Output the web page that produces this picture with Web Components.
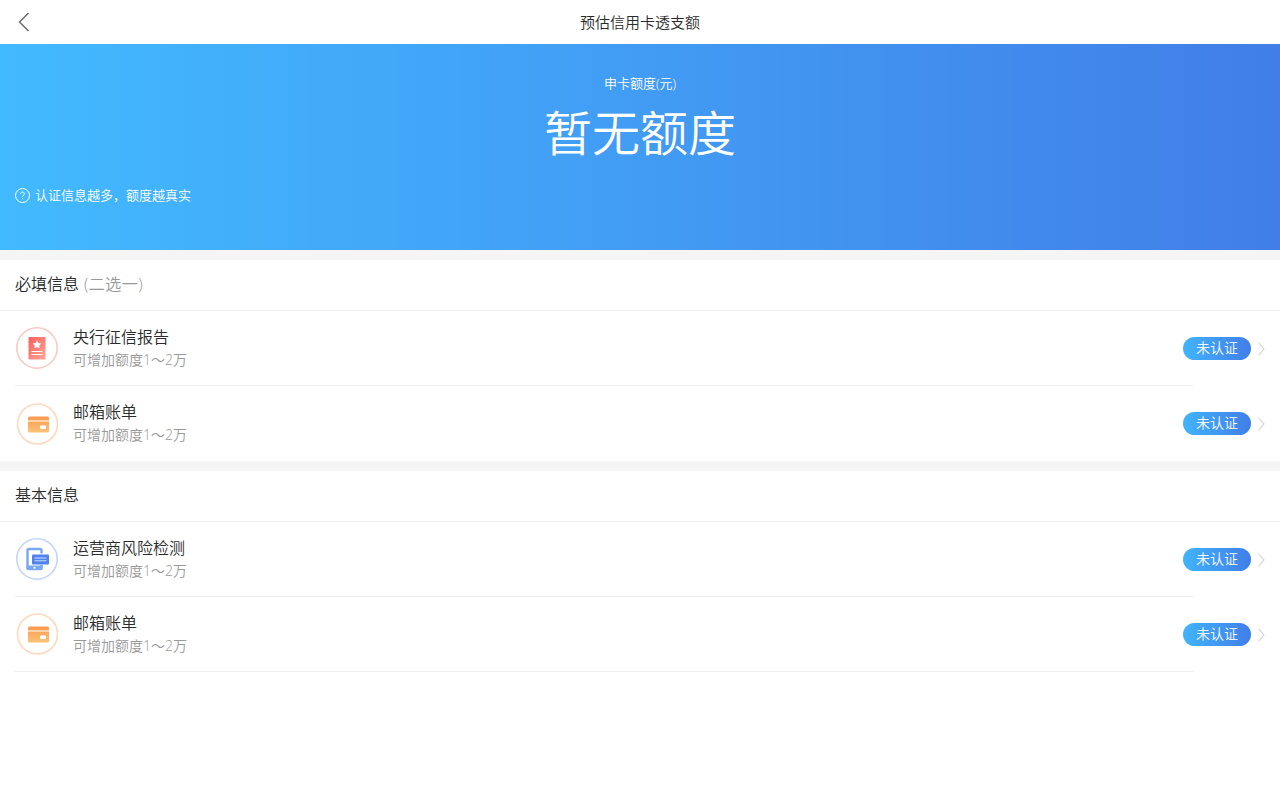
<!DOCTYPE html>
<html lang="zh">
<head>
<meta charset="utf-8">
<title>预估信用卡透支额</title>
<style>
  html, body { margin: 0; background: #fff; }
  body { font-family: "Open Sans", "Noto Sans CJK SC", sans-serif; font-weight: 350; color: #333; }
  credit-section { border-top: 10px solid #f5f5f5; }
</style>
</head>
<body>
<nav-bar>预估信用卡透支额</nav-bar>
<quota-hero label="申卡额度(元)" amount="暂无额度" tip="认证信息越多，额度越真实"></quota-hero>
<credit-section heading="必填信息" note="(二选一)">
  <credit-row icon="report" title="央行征信报告"></credit-row>
  <credit-row icon="card" title="邮箱账单" last></credit-row>
</credit-section>
<credit-section heading="基本信息">
  <credit-row icon="phone" title="运营商风险检测"></credit-row>
  <credit-row icon="card" title="邮箱账单"></credit-row>
</credit-section>

<script>
class NavBar extends HTMLElement {
  constructor() {
    super();
    this.attachShadow({mode: 'open'}).innerHTML = `
      <style>
        :host { display: flex; height: 44px; align-items: center; justify-content: center; position: relative; background: #fff; font-size: 15px; color: #2b2b2b; padding-bottom: 2px; box-sizing: border-box; }
        svg { position: absolute; left: 18px; top: 12px; }
      </style>
      <svg width="12" height="20" viewBox="0 0 12 20" fill="none" stroke="#666" stroke-width="1.4">
        <path d="M10.5 1 1.5 10l9 9"/>
      </svg>
      <slot></slot>`;
  }
}

class QuotaHero extends HTMLElement {
  constructor() {
    super();
    this.attachShadow({mode: 'open'}).innerHTML = `
      <style>
        :host { display: block; height: 206px; box-sizing: border-box; padding: 29px 15px 0; color: #fff; background: linear-gradient(90deg, #42baff 0%, #417ee8 100%); }
        .label { text-align: center; font-size: 13px; line-height: 20px; }
        .amount { text-align: center; font-size: 48px; line-height: 60px; margin-top: 10px; }
        .tip { display: flex; align-items: center; gap: 5px; font-size: 13px; line-height: 20px; margin-top: 22px; }
      </style>
      <div class="label"></div>
      <div class="amount"></div>
      <div class="tip">
        <svg width="15" height="15" viewBox="0 0 15 15" fill="none" stroke="#fff">
          <circle cx="7.5" cy="7.5" r="7"/>
          <path d="M5.6 5.9c0-1.1.8-1.9 1.9-1.9s1.9.8 1.9 1.8c0 1.4-1.9 1.5-1.9 3"/>
          <path d="M7.5 10.2v1.1"/>
        </svg>
        <span class="text"></span>
      </div>`;
  }
  connectedCallback() {
    const root = this.shadowRoot;
    root.querySelector('.label').textContent = this.getAttribute('label');
    root.querySelector('.amount').textContent = this.getAttribute('amount');
    root.querySelector('.text').textContent = this.getAttribute('tip');
  }
}

class CreditSection extends HTMLElement {
  constructor() {
    super();
    this.attachShadow({mode: 'open'}).innerHTML = `
      <style>
        :host { display: block; background: #fff; }
        header { height: 51px; box-sizing: border-box; padding: 0 0 4px 15px; display: flex; align-items: center; gap: 5px; border-bottom: 1px solid #eee; font-size: 16px; color: #2b2b2b; }
        small { font-size: 16px; color: #999; letter-spacing: .5px; }
      </style>
      <header><span class="h"></span><small></small></header>
      <slot></slot>`;
  }
  connectedCallback() {
    this.shadowRoot.querySelector('.h').textContent = this.getAttribute('heading');
    this.shadowRoot.querySelector('small').textContent = this.getAttribute('note') || '';
  }
}

const ICONS = {
  report: `
    <circle cx="21" cy="21" r="20.2" fill="#fff" stroke="#fcc9c5" stroke-width="1.6"/>
    <defs><linearGradient id="g" x1="0" y1="0" x2="1" y2="1"><stop offset="0" stop-color="#f9605c"/><stop offset="1" stop-color="#ffa598"/></linearGradient></defs>
    <rect x="12.5" y="10" width="17" height="22.5" rx="1" fill="url(#g)"/>
    <path d="M21 13.4l1.4 2.7 2.8.4-2 2 .5 2.8-2.7-1.3-2.7 1.3.5-2.8-2-2 2.8-.4z" fill="#fff"/>
    <path d="M15.5 24.5h11M15.5 27.5h11" stroke="#fff" stroke-width="1"/>`,
  card: `
    <circle cx="21.5" cy="21" r="20" fill="#fff" stroke="#fdd9bd" stroke-width="1.6"/>
    <defs><linearGradient id="g" x1="0" y1="0" x2="0" y2="1"><stop offset="0" stop-color="#fb9a50"/><stop offset="1" stop-color="#fdc276"/></linearGradient></defs>
    <rect x="12" y="13.5" width="21" height="16" rx="1.5" fill="url(#g)"/>
    <path d="M12 18h21" stroke="#fff" stroke-width="1"/>
    <rect x="24" y="22.5" width="6" height="3.4" rx=".8" fill="#fff"/>`,
  phone: `
    <circle cx="21" cy="21" r="20.2" fill="#fff" stroke="#c3d5f7" stroke-width="1.6"/>
    <rect x="11.5" y="11" width="14" height="20" rx="1.5" fill="none" stroke="#7ba6f2" stroke-width="2.4"/>
    <rect x="10.5" y="27.5" width="16" height="4.5" rx="1" fill="#7ba6f2"/>
    <circle cx="18.5" cy="29.8" r="1.1" fill="#fff"/>
    <rect x="15" y="15.5" width="19" height="11.5" rx="1" fill="#fff"/>
    <rect x="16" y="16.5" width="17" height="10" rx="1" fill="#4f82ec"/>
    <path d="M18.5 20h12M18.5 22.8h12" stroke="#cfe0ff" stroke-width="1"/>`
};

class CreditRow extends HTMLElement {
  constructor() {
    super();
    this.attachShadow({mode: 'open'}).innerHTML = `
      <style>
        :host { display: block; height: 75px; padding-left: 15px; position: relative; }
        .line { height: 75px; box-sizing: border-box; display: flex; align-items: center; margin-right: 87px; border-bottom: 1px solid #eee; }
        :host([last]) .line { border-bottom: 0; }
        svg.ic { flex: none; margin-left: 1px; }
        .text { margin-left: 15px; margin-top: -2px; }
        .title { font-size: 16px; line-height: 24px; color: #2b2b2b; }
        .sub { font-size: 14px; line-height: 20px; color: #999; margin-top: 1px; }
        .side { position: absolute; right: 15px; top: 26px; display: flex; align-items: center; gap: 7px; }
        .tag { width: 68px; height: 23px; border-radius: 12px; background: linear-gradient(90deg, #41b4fb, #417ee8); color: #fff; font-size: 14px; line-height: 21px; text-align: center; }
      </style>
      <div class="line">
        <svg class="ic" width="42" height="42" viewBox="0 0 42 42"></svg>
        <div class="text">
          <div class="title"></div>
          <div class="sub">可增加额度1～2万</div>
        </div>
      </div>
      <div class="side">
        <span class="tag">未认证</span>
        <svg class="arrow" width="7" height="14" viewBox="0 0 7 14" fill="none" stroke="#d8d8d8" stroke-width="1.2"><path d="M.8.8 6 7 .8 13.2"/></svg>
      </div>`;
  }
  connectedCallback() {
    this.shadowRoot.querySelector('.ic').innerHTML = ICONS[this.getAttribute('icon')];
    this.shadowRoot.querySelector('.title').textContent = this.getAttribute('title');
    this.removeAttribute('title');
  }
}

customElements.define('nav-bar', NavBar);
customElements.define('quota-hero', QuotaHero);
customElements.define('credit-section', CreditSection);
customElements.define('credit-row', CreditRow);
</script>
</body>
</html>
